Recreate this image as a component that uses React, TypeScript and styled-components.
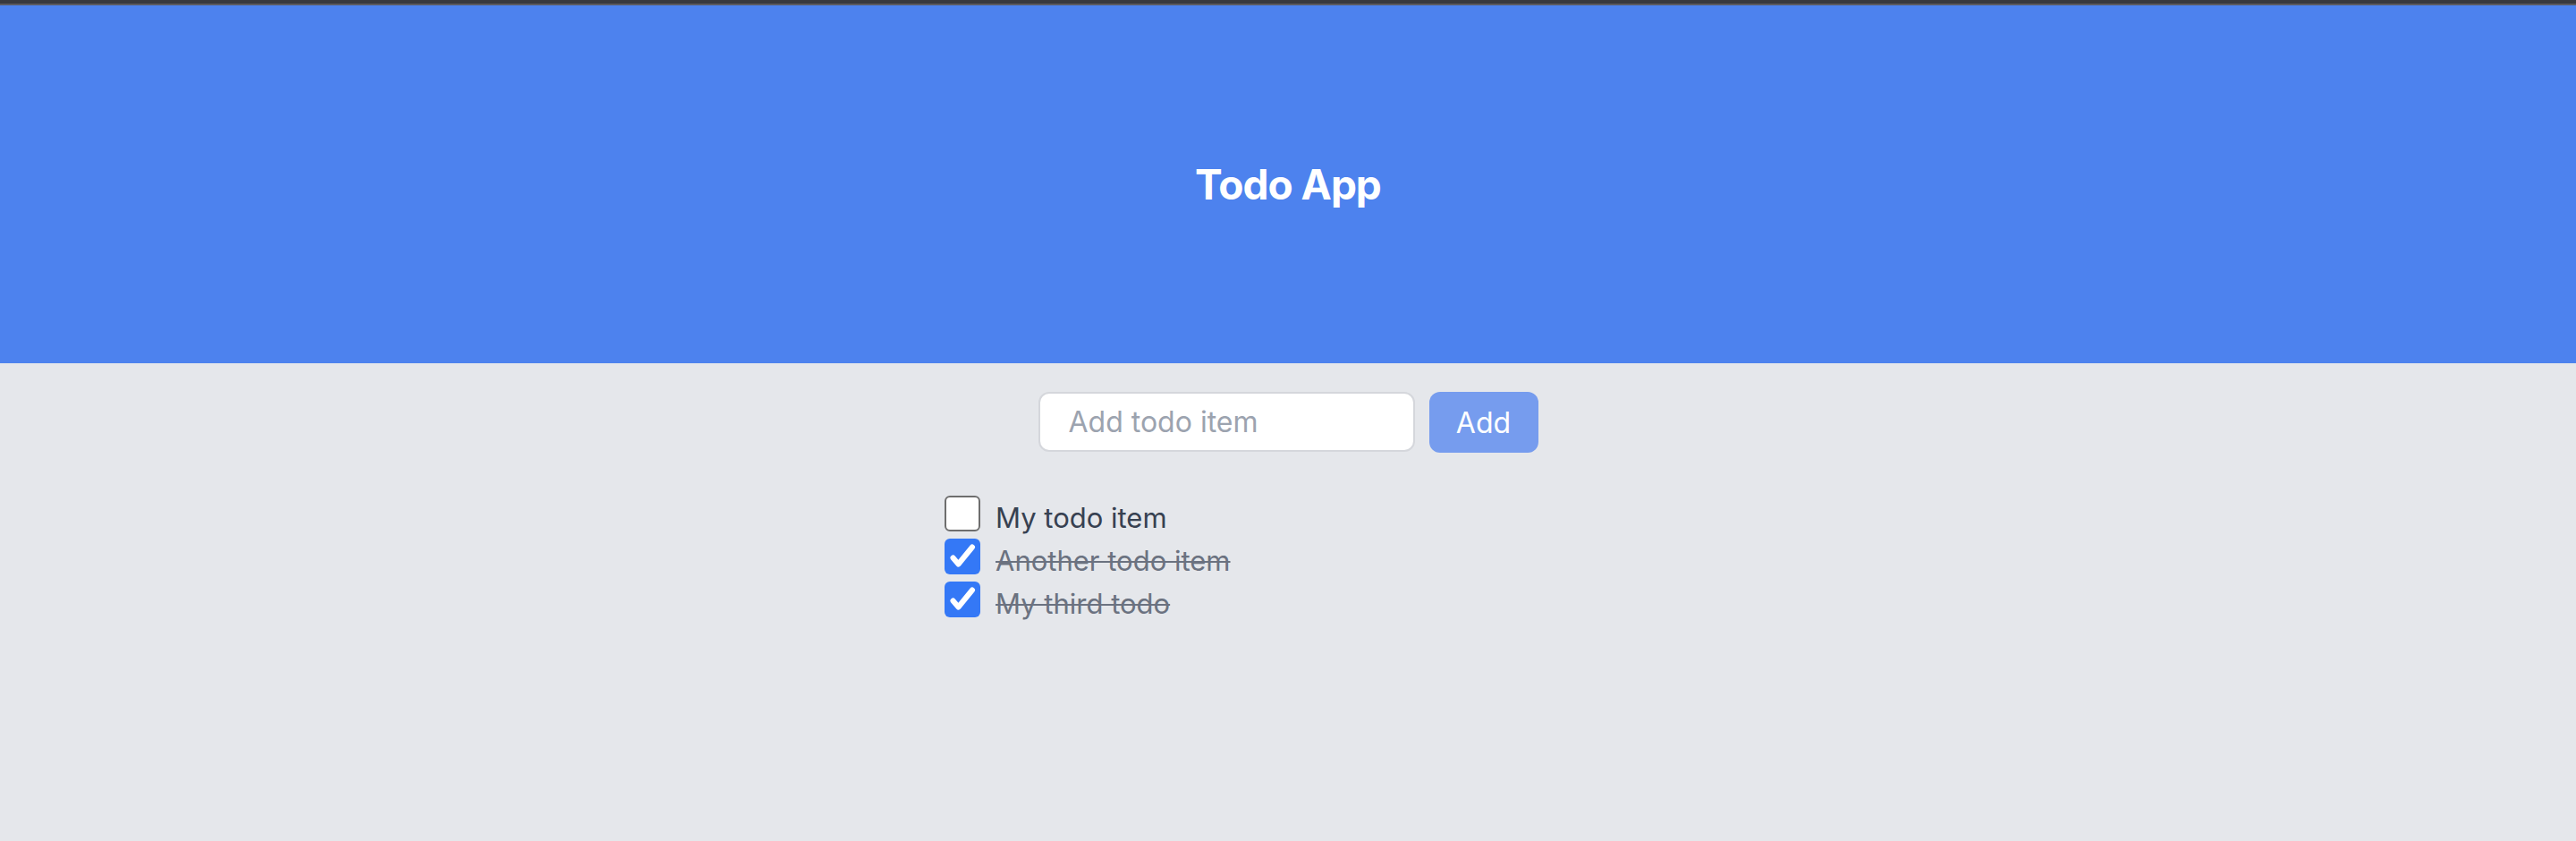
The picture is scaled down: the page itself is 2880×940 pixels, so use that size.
import React, { useState } from 'react';
import styled, { createGlobalStyle } from 'styled-components';

interface Todo {
  id: number;
  text: string;
  done: boolean;
}

const initialTodos: Todo[] = [
  { id: 1, text: 'My todo item', done: false },
  { id: 2, text: 'Another todo item', done: true },
  { id: 3, text: 'My third todo', done: true },
];

const GlobalStyle = createGlobalStyle`
  html, body {
    margin: 0;
    padding: 0;
    background: #e5e7eb;
    font-family: Inter, "Noto Sans", "Liberation Sans", sans-serif;
  }

  * {
    box-sizing: border-box;
  }
`;

const CheckIcon = () => (
  <svg width="40" height="40" viewBox="0 0 40 40" fill="none">
    <path
      d="M9.5 21.5L15.5 28.5L31 9.5"
      stroke="#ffffff"
      strokeWidth="6"
      strokeLinecap="round"
      strokeLinejoin="round"
    />
  </svg>
);

const App = () => {
  const [todos, setTodos] = useState<Todo[]>(initialTodos);
  const [value, setValue] = useState('');

  const toggle = (id: number) =>
    setTodos((list) =>
      list.map((t) => (t.id === id ? { ...t, done: !t.done } : t)),
    );

  const handleSubmit = (e: React.FormEvent) => {
    e.preventDefault();
    if (!value.trim()) return;
    setTodos((list) => [
      ...list,
      { id: Date.now(), text: value.trim(), done: false },
    ]);
    setValue('');
  };

  return (
    <>
      <GlobalStyle />
      <SPage>
        <STopStrip />
        <SHeader>
          <STitle>Todo App</STitle>
        </SHeader>
        <SMain>
          <SForm onSubmit={handleSubmit}>
            <SInput
              placeholder="Add todo item"
              value={value}
              onChange={(e) => setValue(e.target.value)}
            />
            <SAddButton type="submit">Add</SAddButton>
          </SForm>
          <SList>
            {todos.map((todo) => (
              <SItem key={todo.id} onClick={() => toggle(todo.id)}>
                <SCheckbox checked={todo.done}>
                  {todo.done && <CheckIcon />}
                </SCheckbox>
                <SText done={todo.done}>{todo.text}</SText>
              </SItem>
            ))}
          </SList>
        </SMain>
      </SPage>
    </>
  );
};

const SPage = styled.div`
  min-height: 940px;
  display: flex;
  flex-direction: column;
`;

const STopStrip = styled.div`
  height: 6px;
  background: #38393d;
  border-bottom: 2px solid #5b5b60;
`;

const SHeader = styled.header`
  height: 400px;
  display: flex;
  align-items: center;
  justify-content: center;
  background: #4d82ee;
`;

const STitle = styled.h1`
  margin: 0;
  color: #ffffff;
  font-size: 46px;
  font-weight: 700;
  letter-spacing: -1px;
`;

const SMain = styled.main`
  flex: 1;
  display: flex;
  flex-direction: column;
  align-items: center;
  background: #e5e7eb;
`;

const SForm = styled.form`
  display: flex;
  gap: 16px;
  margin-top: 32px;
`;

const SInput = styled.input`
  width: 421px;
  height: 67px;
  padding: 0 32px;
  border: 2px solid #d5d7dc;
  border-radius: 12px;
  background: #ffffff;
  color: #374151;
  font-family: inherit;
  font-size: 32px;
  outline: none;

  &::placeholder {
    color: #9ca3af;
  }
`;

const SAddButton = styled.button`
  width: 122px;
  height: 68px;
  border: none;
  border-radius: 12px;
  background: #769cee;
  color: #ffffff;
  font-family: inherit;
  font-size: 32px;
  cursor: pointer;
`;

const SList = styled.ul`
  width: 768px;
  margin: 44px 0 0;
  padding: 0;
  list-style: none;
`;

const SItem = styled.li`
  height: 48px;
  display: flex;
  align-items: flex-start;
  gap: 17px;
  cursor: pointer;
`;

const SCheckbox = styled.span<{ checked: boolean }>`
  width: 40px;
  height: 40px;
  margin-top: 4px;
  display: flex;
  align-items: center;
  justify-content: center;
  border-radius: 6px;
  border: ${({ checked }) => (checked ? 'none' : '2px solid #6e6e6e')};
  background: ${({ checked }) => (checked ? '#3478f6' : '#ffffff')};
`;

const SText = styled.span<{ done: boolean }>`
  margin-top: 13px;
  font-size: 31px;
  line-height: 32px;
  color: ${({ done }) => (done ? '#6b7280' : '#374151')};
  text-decoration: ${({ done }) => (done ? 'line-through' : 'none')};
  text-decoration-thickness: 2px;
`;

export default App;
